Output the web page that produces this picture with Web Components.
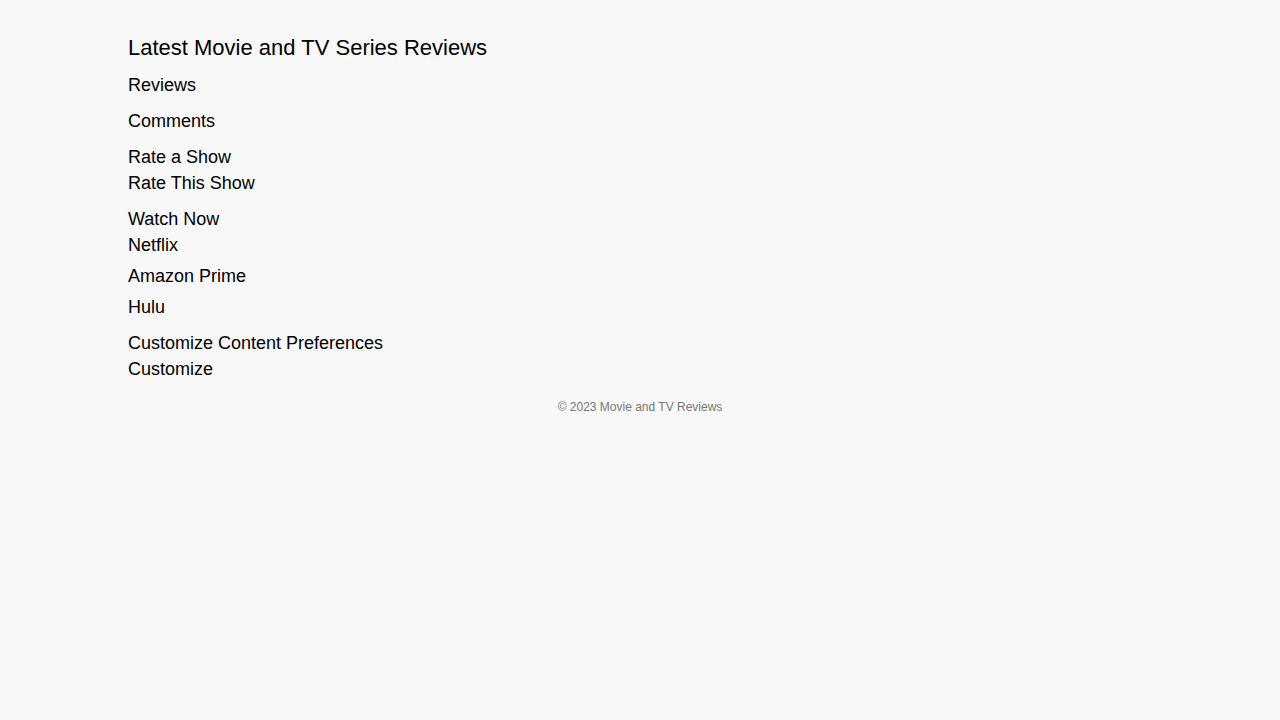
<!DOCTYPE html>
<html lang="en">
<head>
<meta charset="utf-8">
<meta name="viewport" content="width=device-width, initial-scale=1">
<title>Movie and TV Reviews</title>
<style>
body { margin: 0; background: #f8f8f8; color: #000; font-family: "Liberation Sans", Arial, sans-serif; font-size: 18px; line-height: 21px; }
</style>
</head>
<body>
<review-page>
  <span slot="title">Latest Movie and TV Series Reviews</span>
  <review-section heading="Reviews"></review-section>
  <review-section heading="Comments"></review-section>
  <review-section heading="Rate a Show"><action-item>Rate This Show</action-item></review-section>
  <review-section heading="Watch Now">
    <action-item>Netflix</action-item>
    <action-item>Amazon Prime</action-item>
    <action-item>Hulu</action-item>
  </review-section>
  <review-section heading="Customize Content Preferences"><action-item>Customize</action-item></review-section>
  <span slot="footer">© 2023 Movie and TV Reviews</span>
</review-page>
<script>
class ReviewPage extends HTMLElement {
  constructor() {
    super();
    this.attachShadow({ mode: "open" }).innerHTML = `
      <style>
        :host { display: block; width: 80%; margin: 0 auto; padding: 35px 0 20px; }
        h1 { margin: 0 0 14px; font-size: 22px; line-height: 26px; font-weight: 400; }
        main { display: flex; flex-direction: column; gap: 15px; }
        footer { margin-top: 20px; color: #777; font-size: 12px; line-height: 14px; text-align: center; }
      </style>
      <h1><slot name="title"></slot></h1>
      <main><slot></slot></main>
      <footer><slot name="footer"></slot></footer>`;
  }
}
class ReviewSection extends HTMLElement {
  constructor() {
    super();
    this.attachShadow({ mode: "open" }).innerHTML = `
      <style>
        :host { display: block; }
        h2 { margin: 0; font: inherit; }
        .items { display: flex; flex-direction: column; align-items: flex-start; gap: 10px; }
        :host(:not(:empty)) .items { margin-top: 5px; }
      </style>
      <section><h2></h2><div class="items"><slot></slot></div></section>`;
  }
  connectedCallback() {
    this.shadowRoot.querySelector("h2").textContent = this.getAttribute("heading");
  }
}
class ActionItem extends HTMLElement {
  constructor() {
    super();
    this.attachShadow({ mode: "open" }).innerHTML = `
      <style>
        :host { display: block; }
        button { display: block; margin: 0; padding: 0; border: 0; background: none; color: inherit; font: inherit; text-align: left; cursor: pointer; }
      </style>
      <button type="button"><slot></slot></button>`;
  }
}
customElements.define("action-item", ActionItem);
customElements.define("review-section", ReviewSection);
customElements.define("review-page", ReviewPage);
</script>
</body>
</html>
